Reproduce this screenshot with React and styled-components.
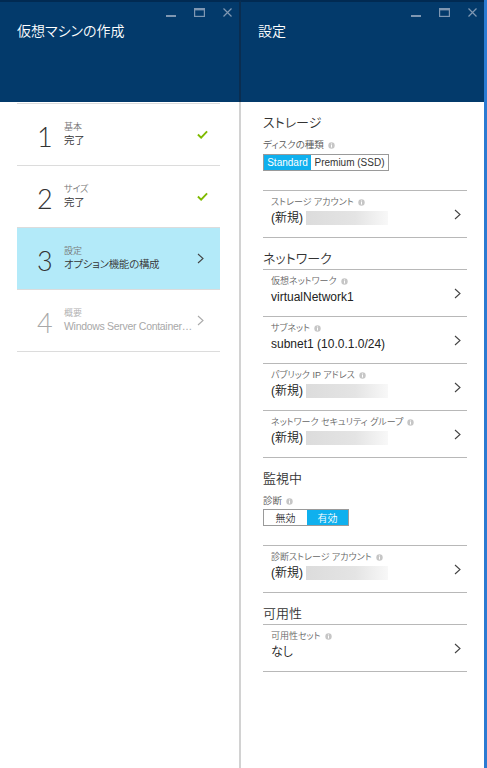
import React from 'react'
import styled, { createGlobalStyle } from 'styled-components'

const GlobalStyle = createGlobalStyle`
  html, body {
    margin: 0;
    padding: 0;
    background: #fff;
  }
  body {
    font-family: "Liberation Sans", "Noto Sans CJK JP", sans-serif;
    font-feature-settings: "palt";
    font-weight: 350;
    color: #333;
  }
`

const Page = styled.div`
  display: flex;
  width: 487px;
  height: 768px;
  overflow: hidden;
`

const Blade = styled.section`
  display: flex;
  flex-direction: column;
  width: ${p => (p.$right ? 'auto' : '241px')};
  flex: ${p => (p.$right ? '1' : 'none')};
  border-right: ${p => (p.$right ? '3px solid #2b7bd2' : 'none')};
`

const Header = styled.header`
  box-sizing: border-box;
  height: 102px;
  flex: none;
  background: #033a6b;
  border-top: 2px solid #012a52;
  border-right: ${p => (p.$divider ? '2px solid #0a2d50' : 'none')};
  padding: 6px 7px 0 17px;
`

const Controls = styled.div`
  display: flex;
  justify-content: flex-end;
  align-items: flex-start;
  gap: 18px;
  height: 12px;
  color: #7f97b2;
`

const Title = styled.h1`
  margin: 2px 0 0;
  font-size: 14px;
  line-height: 18px;
  font-weight: 350;
  color: #fff;
`

const Body = styled.div`
  flex: 1;
  border-right: ${p => (p.$divider ? '2px solid #d2d2d2' : 'none')};
  padding: ${p => p.$pad};
`

const StepList = styled.ol`
  list-style: none;
  margin: 1px 0 0;
  padding: 0;
  border-top: 1px solid #dcdcdc;
`

const Step = styled.li`
  display: flex;
  align-items: center;
  height: 61px;
  padding: 0 12px 0 20px;
  border-bottom: 1px solid #dcdcdc;
  background: ${p => (p.$active ? '#b3eaf9' : 'transparent')};
  color: ${p => (p.$disabled ? '#a8a8a8' : '#333')};
`

const StepNumber = styled.span`
  width: 27px;
  flex: none;
  margin-top: 4px;
  font-family: Lato, "Liberation Sans", sans-serif;
  font-weight: 300;
  font-size: 27px;
  line-height: 1;
`

const StepText = styled.div`
  flex: 1;
  min-width: 0;
  display: flex;
  flex-direction: column;
`

const StepLabel = styled.span`
  font-size: 9px;
  line-height: 11px;
  color: ${p => (p.$disabled ? '#b0b0b0' : '#777')};
`

const StepStatus = styled.span`
  font-size: 10.5px;
  line-height: 15px;
  letter-spacing: -0.3px;
  white-space: nowrap;
`

const StepIcon = styled.span`
  width: 11px;
  flex: none;
  margin-left: 4px;
  display: flex;
  align-items: center;
`

const Section = styled.div`
  padding-top: 11px;
`

const SectionTitle = styled.h2`
  margin: 0;
  font-size: 13px;
  line-height: 20px;
  font-weight: 350;
  color: #333;
`

const FieldLabel = styled.div`
  display: flex;
  align-items: center;
  margin-top: 5px;
  font-size: 9.5px;
  line-height: 14px;
  color: #555;
`

const ToggleGroup = styled.div`
  display: inline-flex;
  margin-top: 1px;
  border: 1px solid #9a9a9a;
`

const ToggleButton = styled.span`
  display: flex;
  align-items: center;
  justify-content: center;
  width: ${p => p.$width}px;
  height: 15px;
  font-size: 10px;
  white-space: nowrap;
  background: ${p => (p.$on ? '#0fb0ee' : '#fff')};
  color: ${p => (p.$on ? '#fff' : '#333')};
`

const RowList = styled.div`
  margin-top: ${p => p.$gap || 0}px;
  border-top: 1px solid #b8b8b8;
`

const Row = styled.div`
  display: flex;
  align-items: center;
  height: 46px;
  padding: 0 6px 0 8px;
  border-bottom: 1px solid #b8b8b8;
`

const RowText = styled.div`
  flex: 1;
  min-width: 0;
  align-self: stretch;
  padding-top: 5px;
  box-sizing: border-box;
`

const RowLabel = styled.div`
  display: flex;
  align-items: center;
  font-size: 9px;
  line-height: 12px;
  color: #666;
`

const RowValue = styled.div`
  display: flex;
  align-items: center;
  margin-top: 2px;
  font-size: 12px;
  line-height: 16px;
  color: #222;
`

const Redacted = styled.span`
  display: inline-block;
  width: 82px;
  height: 14px;
  margin-left: 3px;
  background: linear-gradient(to right, #dcdcdc, #e4e4e4 60%, #f8f8f8);
`

const InfoIcon = () => (
  <svg width="7" height="7" viewBox="0 0 7 7" style={{ marginLeft: 4 }}>
    <circle cx="3.5" cy="3.5" r="3.2" fill="#c6c6c6" />
    <rect x="3" y="3" width="1" height="2.5" fill="#fff" />
    <rect x="3" y="1.5" width="1" height="1" fill="#fff" />
  </svg>
)

const Chevron = ({ color = '#444' }) => (
  <svg width="7" height="11" viewBox="0 0 7 11">
    <polyline points="1,1 6,5.5 1,10" fill="none" stroke={color} strokeWidth="1.1" />
  </svg>
)

const Check = () => (
  <svg width="12" height="9" viewBox="0 0 12 9">
    <polyline points="1,4.5 4.5,8 11,1" fill="none" stroke="#7fba00" strokeWidth="2" />
  </svg>
)

const WindowControls = () => (
  <Controls>
    <svg width="10" height="10" viewBox="0 0 10 10">
      <rect x="0" y="7" width="10" height="2" fill="currentColor" />
    </svg>
    <svg width="11" height="9" viewBox="0 0 11 9">
      <rect x="0.6" y="0.6" width="9.8" height="7.8" fill="none" stroke="currentColor" strokeWidth="1.2" />
      <rect x="0" y="0" width="11" height="2.4" fill="currentColor" />
    </svg>
    <svg width="9" height="9" viewBox="0 0 9 9">
      <path d="M0.5 0.5 L8.5 8.5 M8.5 0.5 L0.5 8.5" stroke="currentColor" strokeWidth="1.2" />
    </svg>
  </Controls>
)

const steps = [
  { n: 1, label: '基本', status: '完了', icon: 'check' },
  { n: 2, label: 'サイズ', status: '完了', icon: 'check' },
  { n: 3, label: '設定', status: 'オプション機能の構成', icon: 'chevron', active: true },
  { n: 4, label: '概要', status: 'Windows Server Container…', icon: 'chevron', disabled: true },
]

const SettingRow = ({ label, value, redacted }) => (
  <Row>
    <RowText>
      <RowLabel>
        {label}
        <InfoIcon />
      </RowLabel>
      <RowValue>
        {value}
        {redacted && <Redacted />}
      </RowValue>
    </RowText>
    <Chevron />
  </Row>
)

export default function App() {
  return (
    <Page>
      <GlobalStyle />
      <Blade>
        <Header $divider>
          <WindowControls />
          <Title>仮想マシンの作成</Title>
        </Header>
        <Body $divider $pad="0 19px 0 17px">
          <StepList>
            {steps.map(s => (
              <Step key={s.n} $active={s.active} $disabled={s.disabled}>
                <StepNumber>{s.n}</StepNumber>
                <StepText>
                  <StepLabel $disabled={s.disabled}>{s.label}</StepLabel>
                  <StepStatus>{s.status}</StepStatus>
                </StepText>
                <StepIcon>
                  {s.icon === 'check' ? <Check /> : <Chevron color={s.disabled ? '#aaa' : '#444'} />}
                </StepIcon>
              </Step>
            ))}
          </StepList>
        </Body>
      </Blade>

      <Blade $right>
        <Header>
          <WindowControls />
          <Title>設定</Title>
        </Header>
        <Body $pad="0 17px 0 22px">
          <Section>
            <SectionTitle>ストレージ</SectionTitle>
            <FieldLabel>
              ディスクの種類
              <InfoIcon />
            </FieldLabel>
            <ToggleGroup>
              <ToggleButton $on $width={47}>Standard</ToggleButton>
              <ToggleButton $width={77}>Premium (SSD)</ToggleButton>
            </ToggleGroup>
            <RowList $gap={19}>
              <SettingRow label="ストレージ アカウント" value="(新規)" redacted />
            </RowList>
          </Section>

          <Section>
            <SectionTitle>ネットワーク</SectionTitle>
            <RowList>
              <SettingRow label="仮想ネットワーク" value="virtualNetwork1" />
              <SettingRow label="サブネット" value="subnet1 (10.0.1.0/24)" />
              <SettingRow label="パブリック IP アドレス" value="(新規)" redacted />
              <SettingRow label="ネットワーク セキュリティ グループ" value="(新規)" redacted />
            </RowList>
          </Section>

          <Section>
            <SectionTitle>監視中</SectionTitle>
            <FieldLabel>
              診断
              <InfoIcon />
            </FieldLabel>
            <ToggleGroup>
              <ToggleButton $width={43}>無効</ToggleButton>
              <ToggleButton $on $width={41}>有効</ToggleButton>
            </ToggleGroup>
            <RowList $gap={19}>
              <SettingRow label="診断ストレージ アカウント" value="(新規)" redacted />
            </RowList>
          </Section>

          <Section>
            <SectionTitle>可用性</SectionTitle>
            <RowList>
              <SettingRow label="可用性セット" value="なし" />
            </RowList>
          </Section>
        </Body>
      </Blade>
    </Page>
  )
}
